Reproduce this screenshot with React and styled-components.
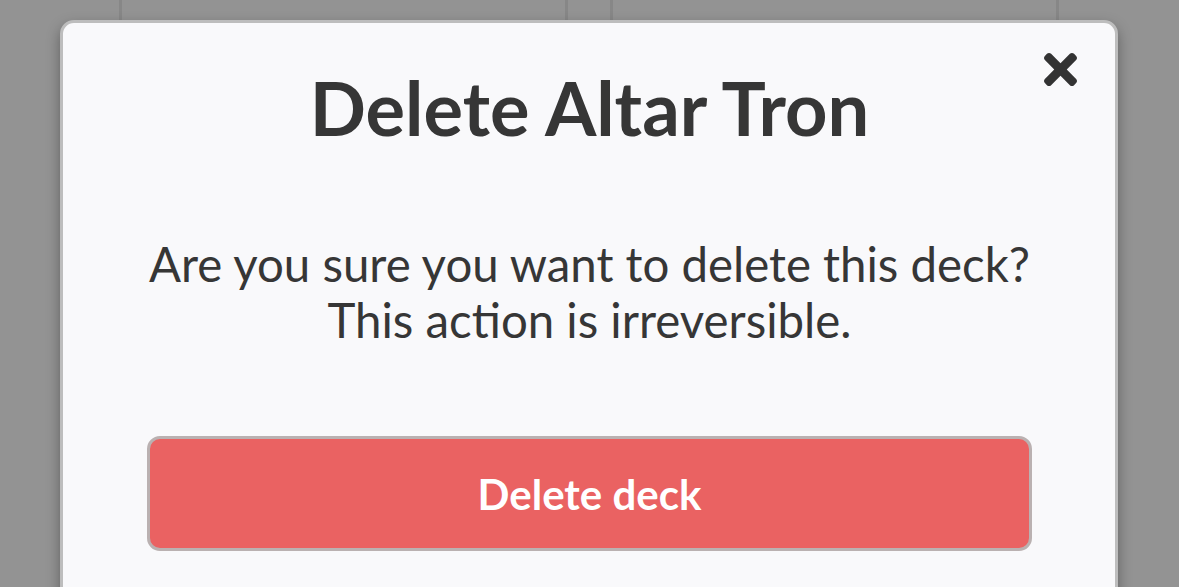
import styled, { createGlobalStyle } from "styled-components";

const Global = createGlobalStyle`
  html, body {
    margin: 0;
    padding: 0;
    background: #939393;
    font-family: Lato, "Open Sans", sans-serif;
    overflow: hidden;
  }
`;

const Page = styled.div`
  position: relative;
  width: 1179px;
  height: 587px;
  background: #939393;
  overflow: hidden;
`;

const CardRow = styled.div`
  display: flex;
  gap: 42px;
  padding-left: 119px;
  height: 100%;
`;

const Card = styled.div`
  width: 443px;
  height: 100%;
  border-left: 3px solid #878787;
  border-right: 3px solid #878787;
`;

const Overlay = styled.div`
  position: absolute;
  inset: 0;
  padding: 20px 61px 0 60px;
`;

const Modal = styled.div`
  position: relative;
  display: flex;
  flex-direction: column;
  align-items: center;
  height: 620px;
  box-sizing: border-box;
  padding: 40px 83px 0 84px;
  background: #f9f9fb;
  border: 3px solid #bdbdbd;
  border-radius: 14px;
  box-shadow: 0 6px 14px rgba(0, 0, 0, 0.35);
  color: #363636;
`;

const Title = styled.h1`
  margin: 0;
  font-size: 74px;
  line-height: 90px;
  font-weight: 700;
  text-align: center;
`;

const Message = styled.p`
  margin: 83px 0 0;
  font-size: 47.4px;
  line-height: 56px;
  font-weight: 400;
  text-align: center;
`;

const DeleteButton = styled.button`
  margin-top: 88px;
  width: 100%;
  height: 115px;
  border: 3px solid #bab1b1;
  border-radius: 13px;
  background: #ea6262;
  color: #ffffff;
  font-family: Lato, "Open Sans", sans-serif;
  font-size: 42px;
  font-weight: 700;
`;

const CloseButton = styled.button`
  position: absolute;
  top: 30px;
  right: 38px;
  width: 33px;
  height: 33px;
  padding: 0;
  border: none;
  background: none;
  color: #333333;
  display: flex;

  svg {
    width: 33px;
    height: 33px;
  }
`;

const TimesIcon = () => (
  <svg viewBox="0 80 352 352" fill="currentColor">
    <path d="M242.72 256l100.07-100.07c12.28-12.28 12.28-32.19 0-44.48l-22.24-22.24c-12.28-12.28-32.19-12.28-44.48 0L176 189.28 75.93 89.21c-12.28-12.28-32.19-12.28-44.48 0L9.21 111.45c-12.28 12.28-12.28 32.19 0 44.48L109.28 256 9.21 356.07c-12.28 12.28-12.28 32.19 0 44.48l22.24 22.24c12.28 12.28 32.2 12.28 44.48 0L176 322.72l100.07 100.07c12.28 12.28 32.2 12.28 44.48 0l22.24-22.24c12.28-12.28 12.28-32.19 0-44.48L242.72 256z" />
  </svg>
);

export default function App() {
  return (
    <>
      <Global />
      <Page>
        <CardRow>
          <Card />
          <Card />
        </CardRow>
        <Overlay>
          <Modal>
            <CloseButton aria-label="Close">
              <TimesIcon />
            </CloseButton>
            <Title>Delete Altar Tron</Title>
            <Message>
              Are you sure you want to delete this deck?
              <br />
              This action is irreversible.
            </Message>
            <DeleteButton>Delete deck</DeleteButton>
          </Modal>
        </Overlay>
      </Page>
    </>
  );
}
